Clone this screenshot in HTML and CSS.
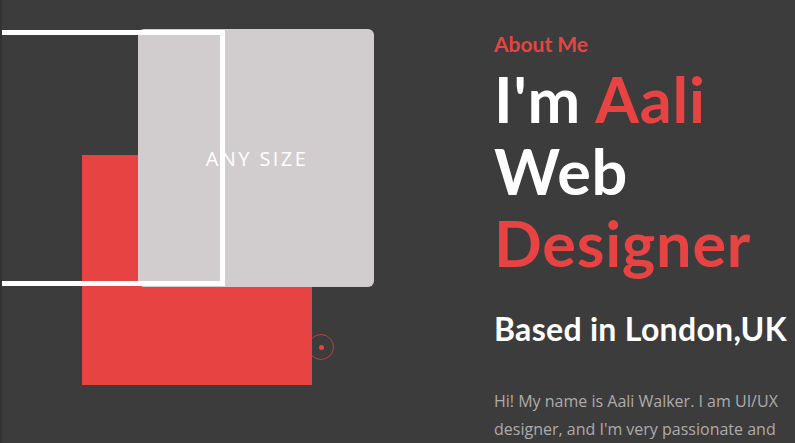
FILE: index.html
```html
<!DOCTYPE html>
<html lang="en">
<head>
<meta charset="utf-8">
<title>About Me</title>
<link rel="stylesheet" href="styles.css">
</head>
<body>
<main class="hero">
  <div class="art">
    <div class="red-block"></div>
    <div class="gray-card"><span class="size-label">ANY SIZE</span></div>
    <div class="outline-frame"></div>
    <div class="ring"><span class="ring-dot"></span></div>
  </div>
  <section class="intro">
    <h3 class="eyebrow">About Me</h3>
    <h1 class="headline">I'm <span class="accent">Aali</span><br>Web<br><span class="accent">Designer</span></h1>
    <h2 class="location">Based in London,UK</h2>
    <p class="bio">Hi! My name is Aali Walker. I am UI/UX designer, and I'm very passionate and dedicated to my work.</p>
  </section>
</main>
</body>
</html>
```
FILE: styles.css
```css
html, body {
  margin: 0;
  padding: 0;
  background: #3c3c3c;
  overflow: hidden;
}
body {
  width: 795px;
  height: 443px;
  border-left: 2px solid #333333;
  box-sizing: border-box;
}
.hero {
  display: flex;
  height: 443px;
  overflow: hidden;
}
.art {
  position: relative;
  width: 492px;
  flex: none;
  height: 443px;
}
.red-block {
  position: absolute;
  left: 80px;
  top: 155px;
  width: 230px;
  height: 230px;
  background: #e84343;
}
.gray-card {
  position: absolute;
  left: 136px;
  top: 29px;
  width: 236px;
  height: 258px;
  background: #d1cdce;
  border-radius: 6px;
  display: flex;
  align-items: center;
  justify-content: center;
}
.size-label {
  color: #ffffff;
  font-family: "Open Sans", sans-serif;
  font-size: 20px;
  letter-spacing: 2.4px;
  margin-left: 2px;
}
.outline-frame {
  position: absolute;
  left: -10px;
  top: 30px;
  width: 223px;
  height: 246px;
  border: 5px solid #ffffff;
}
.ring {
  position: absolute;
  left: 306px;
  top: 334px;
  width: 24px;
  height: 24px;
  border: 1.5px solid rgba(232, 67, 67, 0.7);
  border-radius: 50%;
  display: flex;
  align-items: center;
  justify-content: center;
}
.ring-dot {
  width: 5px;
  height: 5px;
  border-radius: 50%;
  background: #e84343;
}
.intro {
  padding-top: 31px;
  font-family: Lato, "Noto Sans", sans-serif;
}
.eyebrow {
  margin: 0;
  color: #e84343;
  font-size: 21px;
  font-weight: 700;
  line-height: 26px;
}
.headline {
  margin: 6px 0 0;
  color: #ffffff;
  font-size: 63px;
  font-weight: 700;
  line-height: 72px;
  letter-spacing: 0.8px;
}
.accent {
  color: #e84343;
}
.location {
  margin: 30px 0 0;
  color: #ffffff;
  font-size: 32px;
  font-weight: 700;
  line-height: 40px;
  letter-spacing: 0.3px;
}
.bio {
  margin: 38px 0 0;
  width: 290px;
  color: #aeabab;
  font-family: "Open Sans", sans-serif;
  font-size: 16px;
  line-height: 28px;
}
```
